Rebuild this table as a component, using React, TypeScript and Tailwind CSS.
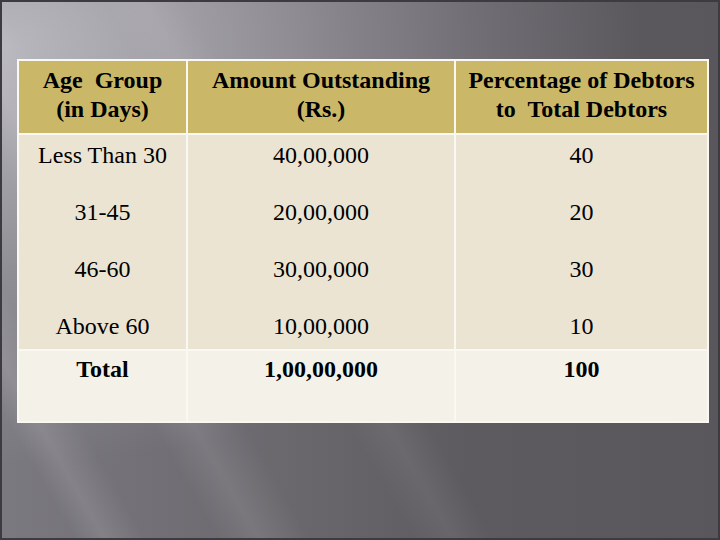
import React from 'react';

const header = ['Age  Group\n(in Days)', 'Amount Outstanding\n(Rs.)', 'Percentage of Debtors\nto  Total Debtors'];

const ages = ['Less Than 30', '31-45', '46-60', 'Above 60'];
const amounts = ['40,00,000', '20,00,000', '30,00,000', '10,00,000'];
const percents = ['40', '20', '30', '10'];

const totals = ['Total', '1,00,00,000', '100'];

const App = () => {
  return (
    <div className="w-[720px] h-[540px] border-[2px] border-[#3c3b40] pl-[15px] pt-[57px] font-['Liberation_Serif','Times_New_Roman',serif] bg-[linear-gradient(60deg,rgba(255,255,255,0)_7%,rgba(255,255,255,0.1)_10%,rgba(255,255,255,0)_14%,rgba(255,255,255,0)_21%,rgba(255,255,255,0.09)_25%,rgba(255,255,255,0)_30%,rgba(255,255,255,0)_40%,rgba(255,255,255,0.06)_44%,rgba(255,255,255,0)_48%),radial-gradient(ellipse_640px_420px_at_0%_8%,rgba(192,190,197,0.9)_0%,rgba(170,168,175,0.45)_55%,rgba(170,168,175,0)_100%),linear-gradient(90deg,#7b7980_0%,#6a686d_40%,#5d5b60_65%,#59575c_100%)]">
      <div className="w-[692px] grid grid-cols-[167px_266px_251px] gap-[2px] p-[2px] bg-[#faf8f3] text-black text-[24px] leading-[29px] text-center">
        {/* header row */}
        {header.map((h, i) => (
          <div key={i} className="h-[72px] bg-[#cab868] pt-[5px] font-bold whitespace-pre">
            {h}
          </div>
        ))}

        {/* body */}
        {[ages, amounts, percents].map((col, i) => (
          <div key={i} className="h-[214px] bg-[#ebe4d3] pt-[6px]">
            {col.map((v, j) => (
              <div key={j} className={j < col.length - 1 ? 'h-[57px]' : ''}>
                {v}
              </div>
            ))}
          </div>
        ))}

        {/* total row */}
        {totals.map((t, i) => (
          <div key={i} className="h-[70px] bg-[#f4f1e9] pt-[4px] font-bold">
            {t}
          </div>
        ))}
      </div>
    </div>
  );
};

export default App;
